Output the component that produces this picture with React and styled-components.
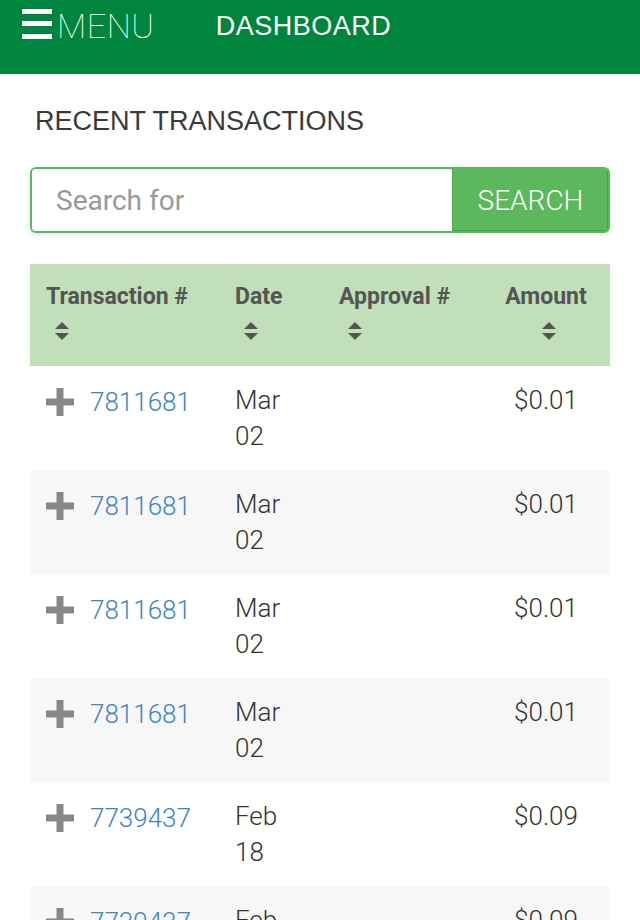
import React from "react";
import styled, { createGlobalStyle } from "styled-components";

const Global = createGlobalStyle`
  html, body { margin: 0; padding: 0; background: #fff; }
  body { font-family: Roboto, "Liberation Sans", Arial, sans-serif; color: #333; }
  * { box-sizing: border-box; }
`;

const TopBar = styled.header`
  background: #00853e;
  height: 74px;
  display: flex;
  align-items: flex-start;
  padding: 0 0 0 22px;
  color: #fff;
`;

const NavRow = styled.div`
  height: 51px;
  display: flex;
  align-items: center;
`;

const MenuToggle = styled.div`
  display: flex;
  align-items: center;
  gap: 5px;
`;

const Burger = styled.div`
  width: 30px;
  height: 30px;
  display: flex;
  flex-direction: column;
  justify-content: space-between;
  margin-top: -4px;
  span {
    display: block;
    height: 5px;
    background: #fff;
  }
`;

const MenuLabel = styled.span`
  font-family: Roboto, sans-serif;
  font-weight: 100;
  font-size: 34px;
  letter-spacing: 0.6px;
`;

const NavLink = styled.span`
  font-family: "Liberation Sans", Arial, sans-serif;
  font-size: 27px;
  letter-spacing: 0.5px;
  margin-left: 61px;
  margin-top: 2px;
`;

const Main = styled.main`
  padding: 0 30px;
`;

const Title = styled.h2`
  margin: 32px 0 0;
  padding-left: 5px;
  font-family: "Liberation Sans", Arial, sans-serif;
  font-weight: 400;
  font-size: 27px;
  line-height: 31px;
  color: #3a3a3a;
`;

const SearchGroup = styled.form`
  margin-top: 30px;
  display: flex;
  height: 66px;
  border: 2px solid #5cb85c;
  border-radius: 6px;
  box-shadow: 0 2px 4px rgba(0, 0, 0, 0.1);
  overflow: hidden;
`;

const SearchInput = styled.input`
  flex: 1;
  min-width: 0;
  border: none;
  outline: none;
  padding: 0 24px;
  font-family: Roboto, sans-serif;
  font-weight: 400;
  font-size: 28px;
  color: #555;
  box-shadow: inset 0 2px 2px rgba(0, 0, 0, 0.08);
  &::placeholder { color: #999; }
`;

const SearchButton = styled.button`
  width: 156px;
  border: none;
  border-left: 1px solid #4cae4c;
  background: #5cb85c;
  color: #fff;
  font-family: Roboto, sans-serif;
  font-weight: 300;
  font-size: 28px;
  padding: 0;
  box-shadow: inset -1px -1px 0 #43a043;
`;

const Table = styled.div`
  margin-top: 31px;
  display: grid;
  grid-template-columns: 189px 104px 159px 128px;
`;

const HeadCell = styled.div`
  background: #c1dfb8;
  padding: 18px 16px 0;
  height: 102px;
  font-weight: 700;
  font-size: 23px;
  line-height: 30px;
  color: #555;
  text-align: ${(p) => (p.$center ? "center" : "left")};
  white-space: nowrap;
`;

const SortIcon = styled.svg`
  display: block;
  width: 14px;
  height: 20px;
  margin: 10px 0 0 ${(p) => (p.$center ? "auto" : "9px")};
  ${(p) => (p.$center ? "margin-right: auto; position: relative; left: 3px;" : "")}
`;

const Cell = styled.div`
  background: ${(p) => (p.$alt ? "#f7f7f7" : "#fff")};
  padding: 16px 16px;
  height: 104px;
  font-weight: 300;
  font-size: 26px;
  line-height: 36px;
  color: #333;
  text-align: ${(p) => (p.$center ? "center" : "left")};
`;

const TxnCell = styled(Cell)`
  display: flex;
  align-items: flex-start;
  gap: 16px;
  padding-top: 18px;
`;

const PlusIcon = styled.svg`
  width: 28px;
  height: 28px;
  flex: none;
  margin-top: 4px;
`;

const TxnLink = styled.a`
  color: #3d85c6;
  text-decoration: none;
  font-size: 26px;
  line-height: 36px;
`;

const DateText = styled.span`
  display: block;
  width: 50px;
`;

const Sort = ({ center }) => (
  <SortIcon $center={center} viewBox="0 0 14 20">
    <path d="M7 0 L14 7 L0 7 Z" fill="#555" />
    <path d="M0 11 L14 11 L7 18 Z" fill="#555" />
  </SortIcon>
);

const Plus = () => (
  <PlusIcon viewBox="0 0 28 28">
    <rect x="10.5" y="0" width="7" height="28" fill="#888" />
    <rect x="0" y="10.5" width="28" height="7" fill="#888" />
  </PlusIcon>
);

const rows = [
  { id: "7811681", date: "Mar 02", amount: "$0.01" },
  { id: "7811681", date: "Mar 02", amount: "$0.01" },
  { id: "7811681", date: "Mar 02", amount: "$0.01" },
  { id: "7811681", date: "Mar 02", amount: "$0.01" },
  { id: "7739437", date: "Feb 18", amount: "$0.09" },
  { id: "7739437", date: "Feb 18", amount: "$0.09" },
];

export default function App() {
  return (
    <>
      <Global />
      <TopBar>
        <NavRow>
          <MenuToggle>
            <Burger>
              <span />
              <span />
              <span />
            </Burger>
            <MenuLabel>MENU</MenuLabel>
          </MenuToggle>
          <NavLink>DASHBOARD</NavLink>
        </NavRow>
      </TopBar>
      <Main>
        <Title>RECENT TRANSACTIONS</Title>
        <SearchGroup onSubmit={(e) => e.preventDefault()}>
          <SearchInput placeholder="Search for" />
          <SearchButton type="submit">SEARCH</SearchButton>
        </SearchGroup>
        <Table>
          <HeadCell>
            Transaction #
            <Sort />
          </HeadCell>
          <HeadCell>
            Date
            <Sort />
          </HeadCell>
          <HeadCell>
            Approval #
            <Sort />
          </HeadCell>
          <HeadCell $center>
            Amount
            <Sort center />
          </HeadCell>
          {rows.map((r, i) => {
            const alt = i % 2 === 1;
            return (
              <React.Fragment key={i}>
                <TxnCell $alt={alt}>
                  <Plus />
                  <TxnLink href="#">{r.id}</TxnLink>
                </TxnCell>
                <Cell $alt={alt}>
                  <DateText>{r.date}</DateText>
                </Cell>
                <Cell $alt={alt} />
                <Cell $alt={alt} $center>
                  {r.amount}
                </Cell>
              </React.Fragment>
            );
          })}
        </Table>
      </Main>
    </>
  );
}
